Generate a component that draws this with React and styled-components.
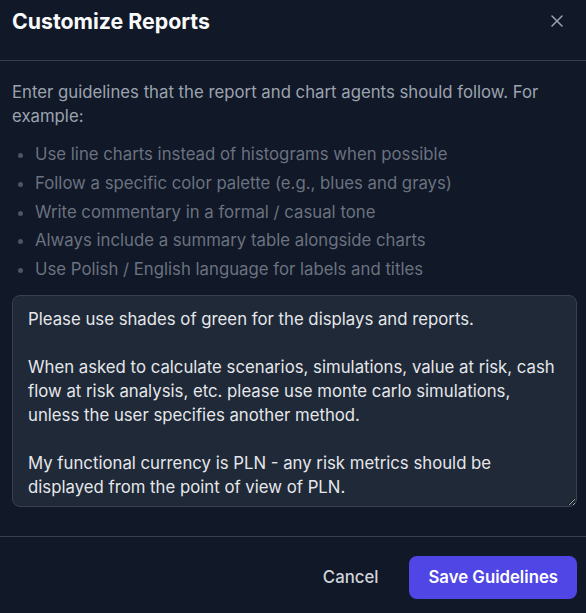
import React from 'react'
import styled, { createGlobalStyle } from 'styled-components'

const GlobalStyle = createGlobalStyle`
  html, body {
    margin: 0;
    padding: 0;
    background: #111827;
  }
  body {
    font-family: Inter, "Noto Sans", sans-serif;
    -webkit-font-smoothing: antialiased;
  }
`

const Modal = styled.div`
  width: 586px;
  height: 613px;
  background: #111827;
  display: flex;
  flex-direction: column;
  overflow: hidden;
`
const Header = styled.div`
  height: 60px;
  box-sizing: content-box;
  border-bottom: 1px solid #374151;
  display: flex;
  justify-content: space-between;
  align-items: flex-start;
  padding: 0 12px 0 12px;
`
const Title = styled.h2`
  margin: 6px 0 0 0;
  font-size: 21.3px;
  line-height: 30px;
  font-weight: 700;
  color: #f9fafb;
`
const CloseButton = styled.button`
  background: none;
  border: none;
  padding: 0;
  margin: 15px 11px 0 0;
  width: 12px;
  height: 12px;
  display: flex;
  color: #9ca3af;
  cursor: pointer;
`
const Body = styled.div`
  padding: 19px 9px 29px 12px;
  border-bottom: 1px solid #374151;
`
const Intro = styled.p`
  margin: 0;
  font-size: 16.75px;
  line-height: 24px;
  color: #9ca3af;
`
const List = styled.ul`
  margin: 12px 0 11px 0;
  padding-left: 23px;
  list-style: disc;
  color: #6b7280;
`
const Item = styled.li`
  font-size: 16.75px;
  line-height: 28.75px;
  &::marker {
    color: #4b5563;
  }
`
const TextArea = styled.textarea`
  display: block;
  width: 565px;
  height: 212px;
  box-sizing: border-box;
  margin: 0;
  padding: 11px 12px 11px 15px;
  background: #1f2937;
  border: 1px solid #374151;
  border-radius: 8px;
  color: #e5e7eb;
  font-family: Inter, "Noto Sans", sans-serif;
  font-size: 16.75px;
  line-height: 24px;
  outline: none;
  overflow: hidden;
  resize: vertical;
`
const Footer = styled.div`
  display: flex;
  justify-content: flex-end;
  align-items: center;
  gap: 15px;
  padding: 19px 9px 0 12px;
`
const Button = styled.button`
  height: 43px;
  padding: 0 ${(p) => (p.$primary ? '19px' : '16px')};
  border: none;
  border-radius: 8px;
  font-family: Inter, "Noto Sans", sans-serif;
  font-size: 16.75px;
  font-weight: ${(p) => (p.$primary ? 600 : 500)};
  color: ${(p) => (p.$primary ? '#ffffff' : '#d1d5db')};
  background: ${(p) => (p.$primary ? '#4f46e5' : 'transparent')};
  cursor: pointer;
`

const examples = [
  'Use line charts instead of histograms when possible',
  'Follow a specific color palette (e.g., blues and grays)',
  'Write commentary in a formal / casual tone',
  'Always include a summary table alongside charts',
  'Use Polish / English language for labels and titles',
]

const initialText = `Please use shades of green for the displays and reports.

When asked to calculate scenarios, simulations, value at risk, cash flow at risk analysis, etc. please use monte carlo simulations, unless the user specifies another method.

My functional currency is PLN - any risk metrics should be displayed from the point of view of PLN.`

export default function App() {
  return (
    <>
      <GlobalStyle />
      <Modal>
        <Header>
          <Title>Customize Reports</Title>
          <CloseButton aria-label="Close">
            <svg width="12" height="12" viewBox="0 0 12 12" fill="none" stroke="currentColor" strokeWidth="1.5" strokeLinecap="round">
              <path d="M1 1L11 11M11 1L1 11" />
            </svg>
          </CloseButton>
        </Header>
        <Body>
          <Intro>
            Enter guidelines that the report and chart agents should follow. For example:
          </Intro>
          <List>
            {examples.map((e) => (
              <Item key={e}>{e}</Item>
            ))}
          </List>
          <TextArea defaultValue={initialText} spellCheck={false} />
        </Body>
        <Footer>
          <Button>Cancel</Button>
          <Button $primary>Save Guidelines</Button>
        </Footer>
      </Modal>
    </>
  )
}
